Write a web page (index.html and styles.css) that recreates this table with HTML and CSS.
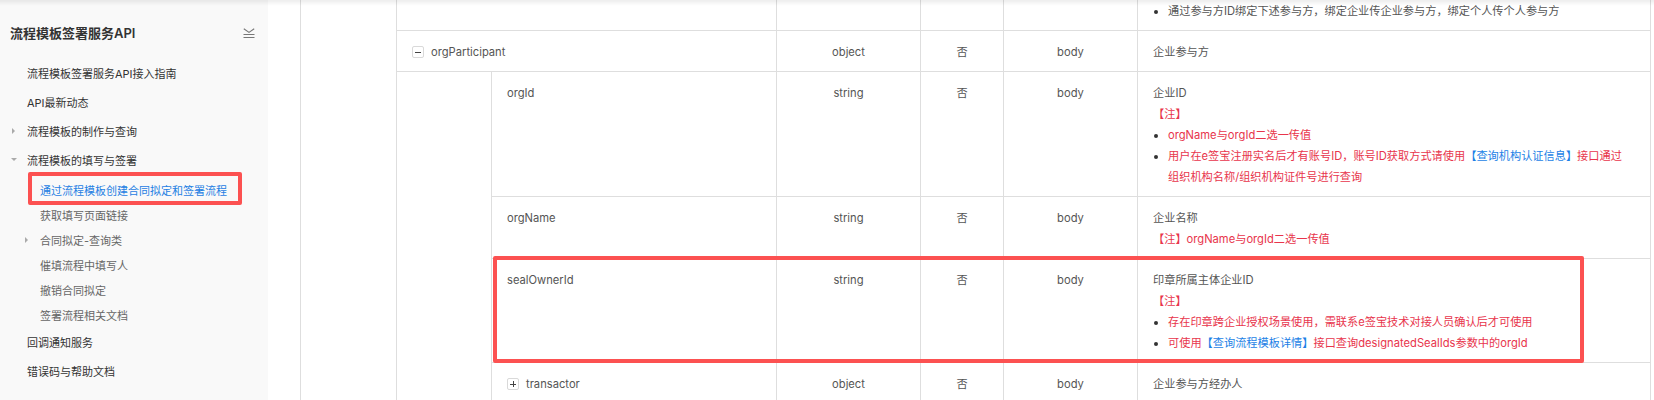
FILE: index.html
```html
<!DOCTYPE html>
<html lang="zh-CN">
<head>
<meta charset="utf-8">
<title>流程模板签署服务API</title>
<link rel="stylesheet" href="styles.css">
</head>
<body>
<div class="topshadow"></div>
<div class="page">
  <aside class="sidebar">
    <div class="side-head">
      <span class="side-title">流程模板签署服务API</span>
      <svg class="collapse" width="12" height="10" viewBox="0 0 12 10" aria-hidden="true">
        <polyline points="0.8,0.8 6,4.4 11.2,0.8" fill="none" stroke="#777" stroke-width="1.1"/>
        <line x1="0.5" y1="6.5" x2="11.5" y2="6.5" stroke="#777" stroke-width="1"/>
        <line x1="0.5" y1="9.5" x2="11.5" y2="9.5" stroke="#777" stroke-width="1"/>
      </svg>
    </div>
    <ul class="nav">
      <li class="nav-item"><span class="caret"></span>流程模板签署服务API接入指南</li>
      <li class="nav-item"><span class="caret"></span>API最新动态</li>
      <li class="nav-item"><span class="caret right"></span>流程模板的制作与查询</li>
      <li class="nav-item"><span class="caret down"></span>流程模板的填写与签署</li>
      <li class="nav-group">
        <ul class="sub">
          <li class="sub-item active"><span class="caret"></span>通过流程模板创建合同拟定和签署流程</li>
          <li class="sub-item"><span class="caret"></span>获取填写页面链接</li>
          <li class="sub-item"><span class="caret right"></span>合同拟定-查询类</li>
          <li class="sub-item"><span class="caret"></span>催填流程中填写人</li>
          <li class="sub-item"><span class="caret"></span>撤销合同拟定</li>
          <li class="sub-item"><span class="caret"></span>签署流程相关文档</li>
        </ul>
      </li>
      <li class="nav-item"><span class="caret"></span>回调通知服务</li>
      <li class="nav-item tail"><span class="caret"></span>错误码与帮助文档</li>
    </ul>
  </aside>

  <main class="content">
    <div class="table-wrap">
      <table class="params">
        <colgroup>
          <col class="w0"><col class="w1"><col class="w2"><col class="w3"><col class="w4"><col class="w5"><col class="w6">
        </colgroup>
        <tbody>
          <tr class="cut">
            <td rowspan="6"></td>
            <td colspan="2"></td>
            <td class="c"></td>
            <td class="c"></td>
            <td class="c"></td>
            <td>
              <ul class="dots"><li>通过参与方ID绑定下述参与方，绑定企业传企业参与方，绑定个人传个人参与方</li></ul>
            </td>
          </tr>
          <tr>
            <td colspan="2"><span class="tog minus"></span>orgParticipant</td>
            <td class="c">object</td>
            <td class="c">否</td>
            <td class="c">body</td>
            <td>企业参与方</td>
          </tr>
          <tr>
            <td rowspan="4"></td>
            <td>orgId</td>
            <td class="c">string</td>
            <td class="c">否</td>
            <td class="c">body</td>
            <td>
              <div>企业ID</div>
              <div class="warn">【注】</div>
              <ul class="dots">
                <li class="warn">orgName与orgId二选一传值</li>
                <li class="warn">用户在e签宝注册实名后才有账号ID，账号ID获取方式请使用<span class="link">【查询机构认证信息】</span>接口通过<br>组织机构名称/组织机构证件号进行查询</li>
              </ul>
            </td>
          </tr>
          <tr>
            <td>orgName</td>
            <td class="c">string</td>
            <td class="c">否</td>
            <td class="c">body</td>
            <td>
              <div>企业名称</div>
              <div class="warn">【注】orgName与orgId二选一传值</div>
            </td>
          </tr>
          <tr>
            <td>sealOwnerId</td>
            <td class="c">string</td>
            <td class="c">否</td>
            <td class="c">body</td>
            <td>
              <div>印章所属主体企业ID</div>
              <div class="warn">【注】</div>
              <ul class="dots">
                <li class="warn">存在印章跨企业授权场景使用，需联系e签宝技术对接人员确认后才可使用</li>
                <li class="warn">可使用<span class="link">【查询流程模板详情】</span>接口查询designatedSealIds参数中的orgId</li>
              </ul>
            </td>
          </tr>
          <tr>
            <td><span class="tog plus"></span>transactor</td>
            <td class="c">object</td>
            <td class="c">否</td>
            <td class="c">body</td>
            <td>企业参与方经办人</td>
          </tr>
        </tbody>
      </table>
      <div class="mark"></div>
    </div>
  </main>
</div>
</body>
</html>
```

FILE: styles.css
```css
* { box-sizing: border-box; }

html, body {
  margin: 0;
  padding: 0;
  background: #ffffff;
  font-family: Inter, "Noto Sans CJK SC", sans-serif;
  font-size: 11px;
  color: #555555;
  overflow: hidden;
}

.topshadow {
  position: fixed;
  top: 0;
  left: 0;
  right: 0;
  height: 6px;
  background: linear-gradient(to bottom, rgba(0, 0, 0, 0.07), rgba(0, 0, 0, 0));
  z-index: 5;
  pointer-events: none;
}

.page {
  display: flex;
  align-items: flex-start;
  height: 400px;
}

/* ---------- sidebar ---------- */
.sidebar {
  flex: 0 0 268px;
  width: 268px;
  height: 400px;
  background: #f9f9f9;
  padding-top: 23px;
}

.side-head {
  display: flex;
  align-items: center;
  justify-content: space-between;
  height: 20px;
  padding: 0 13px 0 10px;
  margin-bottom: 15px;
}

.side-title {
  font-size: 13px;
  font-weight: 600;
  color: #333333;
  line-height: 20px;
}

.collapse { display: block; }

.nav, .sub {
  list-style: none;
  margin: 0;
  padding: 0;
}

.nav-item {
  display: flex;
  align-items: center;
  height: 29px;
  padding-left: 11px;
  color: #333333;
  font-size: 11px;
}

.nav-group { padding-top: 3px; }

.sub-item {
  position: relative;
  display: flex;
  align-items: center;
  height: 25px;
  padding-left: 24px;
  color: #666666;
  font-size: 11px;
}

.sub-item.active { color: #1f80e3; }

.sub-item.active::after {
  content: "";
  position: absolute;
  top: -5px;
  bottom: -3px;
  left: 28px;
  right: 26px;
  border: 4px solid #fc5151;
  border-radius: 2px;
}

.caret {
  flex: 0 0 16px;
  width: 16px;
  height: 8px;
  position: relative;
}

.caret.right::before {
  content: "";
  position: absolute;
  left: 1px;
  top: 1px;
  border-left: 3px solid #aaaaaa;
  border-top: 3px solid transparent;
  border-bottom: 3px solid transparent;
}

.caret.down::before {
  content: "";
  position: absolute;
  left: 0;
  top: 2px;
  border-top: 3px solid #aaaaaa;
  border-left: 3px solid transparent;
  border-right: 3px solid transparent;
}

/* ---------- content ---------- */
.content {
  flex: 1;
  padding: 0 5px 0 32px;
}

.table-wrap { position: relative; }

.params {
  border-collapse: collapse;
  table-layout: fixed;
  width: 1350px;
}

.w0 { width: 96px; }
.w1 { width: 95px; }
.w2 { width: 285px; }
.w3 { width: 144px; }
.w4 { width: 83px; }
.w5 { width: 134px; }
.w6 { width: 513px; }

.params td {
  border: 1px solid #dedede;
  padding: 11px 15px 8px;
  vertical-align: top;
  line-height: 21px;
  font-size: 11.2px;
  color: #555555;
  white-space: nowrap;
}

.params td.c { text-align: center; }

.params tr.cut td {
  border-top: 0;
  padding-top: 1px;
}

.dots {
  list-style: none;
  margin: 0;
  padding: 0;
}

.dots li {
  position: relative;
  padding-left: 15px;
}

.dots li::before {
  content: "";
  position: absolute;
  left: 1px;
  top: 9px;
  width: 4px;
  height: 4px;
  border-radius: 50%;
  background: #333333;
}

.warn { color: #e8354c; }
.link { color: #1c7fe6; }

.tog {
  display: inline-block;
  position: relative;
  width: 12px;
  height: 12px;
  border: 1px solid #d9d9d9;
  border-radius: 2px;
  background: #ffffff;
  margin-right: 7px;
  vertical-align: -2px;
}

.tog::before {
  content: "";
  position: absolute;
  left: 2px;
  top: 4.5px;
  width: 6px;
  height: 1px;
  background: #444444;
}

.tog.plus::after {
  content: "";
  position: absolute;
  left: 4.5px;
  top: 2px;
  width: 1px;
  height: 6px;
  background: #444444;
}

.mark {
  position: absolute;
  left: 193px;
  top: 256px;
  width: 1091px;
  height: 107px;
  border: 4px solid #fc5151;
  border-radius: 2px;
  pointer-events: none;
}
```
